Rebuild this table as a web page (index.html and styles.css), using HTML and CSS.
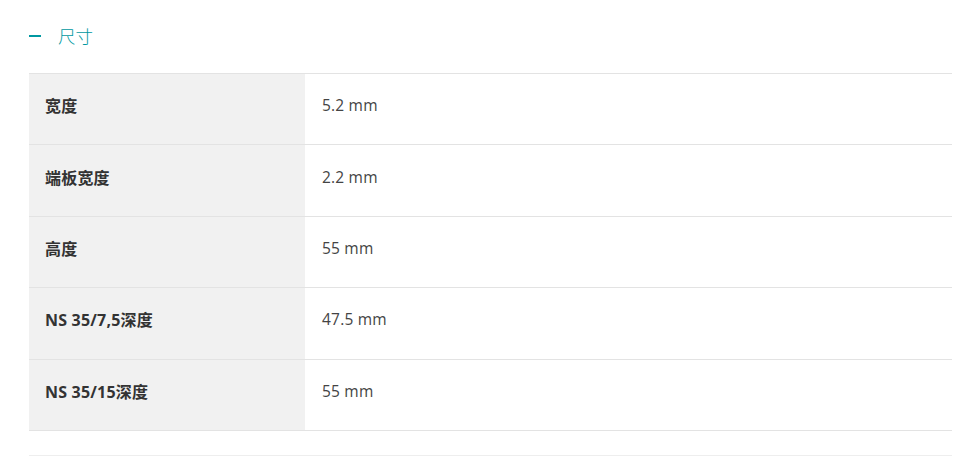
FILE: index.html
```html
<!DOCTYPE html>
<html lang="zh">
<head>
<meta charset="utf-8">
<link rel="stylesheet" href="styles.css">
</head>
<body>
<section class="panel">
  <div class="head"><span class="dash"></span><span class="title">尺寸</span></div>
  <div class="table">
    <div class="row"><div class="k">宽度</div><div class="v">5.2 mm</div></div>
    <div class="row"><div class="k">端板宽度</div><div class="v">2.2 mm</div></div>
    <div class="row"><div class="k">高度</div><div class="v">55 mm</div></div>
    <div class="row"><div class="k">NS 35/7,5深度</div><div class="v">47.5 mm</div></div>
    <div class="row"><div class="k">NS 35/15深度</div><div class="v">55 mm</div></div>
  </div>
  <div class="foot"></div>
</section>
</body>
</html>
```
FILE: styles.css
```css
html, body { margin: 0; padding: 0; background: #fff; }
body { font-family: "Open Sans", "Noto Sans CJK SC", sans-serif; color: #333; }
.panel { padding: 0 15px 0 29px; }
.head { display: flex; align-items: center; height: 73px; padding-bottom: 2px; box-sizing: border-box; }
.dash { width: 12px; height: 2px; background: #0098a1; margin-right: 17px; }
.title { color: #0098a1; font-size: 17.5px; font-weight: 300; font-family: "Noto Sans CJK SC", sans-serif; }
.table { border-top: 1px solid #e3e3e3; }
.row { display: flex; height: 71.4px; border-bottom: 1px solid #e3e3e3; box-sizing: border-box; }
.k { width: 276px; background: #f1f1f1; padding-left: 16px; display: flex; align-items: center; font-weight: 700; font-size: 16px; letter-spacing: 0.2px; color: #333; box-sizing: border-box; padding-bottom: 8px; }
.v { flex: 1; padding-left: 17px; display: flex; align-items: center; font-size: 15.5px; letter-spacing: 0.2px; color: #444; padding-bottom: 8px; }
.foot { margin-top: 24px; border-top: 1px solid #eeeeee; }
```
